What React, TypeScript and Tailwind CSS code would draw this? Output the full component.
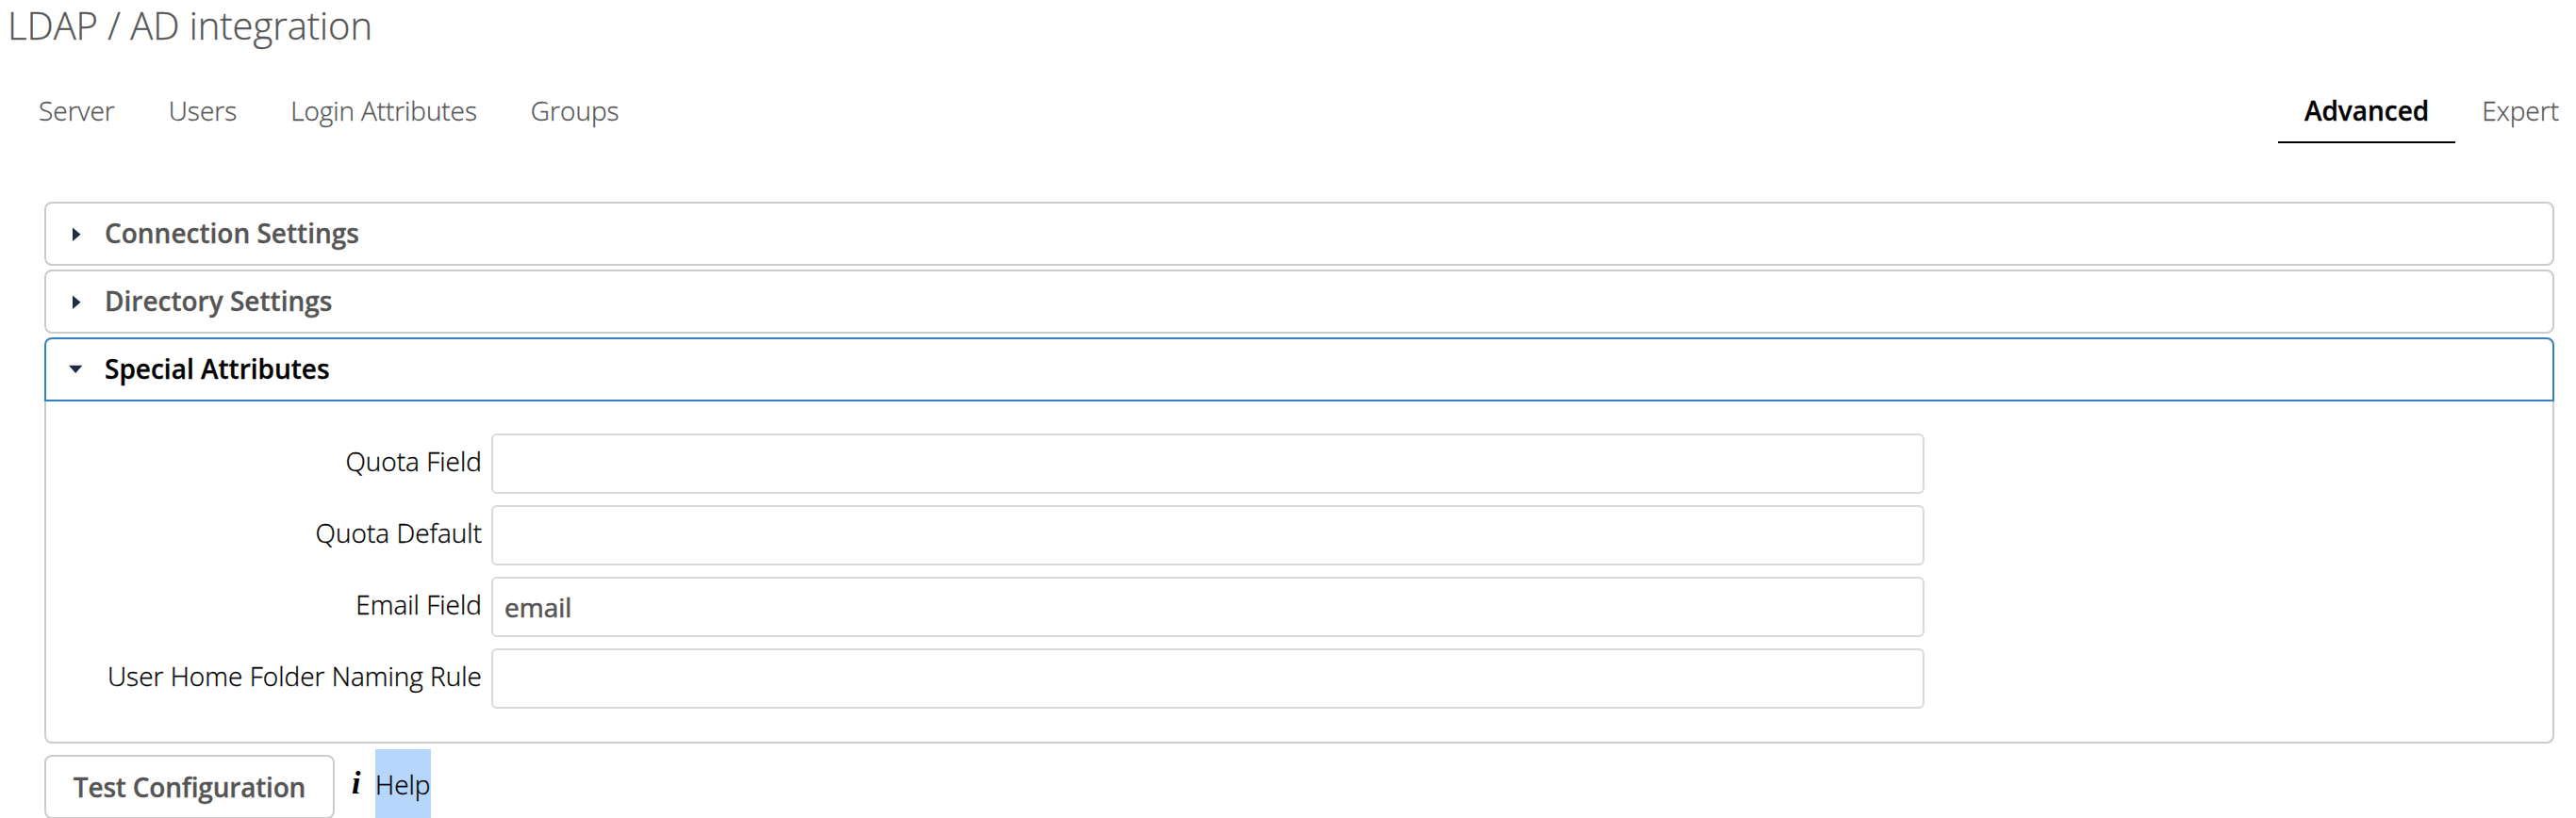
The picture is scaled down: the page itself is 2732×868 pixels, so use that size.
import React from 'react';

const tab = 'h-[68px] leading-[66px] whitespace-nowrap';

function Field({ label, value = '' }: { label: string; value?: string }) {
  return (
    <div className="flex h-[76px]">
      <label className="mr-[10px] w-[462px] pt-[9px] text-right text-[28px] leading-[40px] font-light text-black">{label}</label>
      <input readOnly value={value} className="h-[64px] w-[1520px] rounded-[6px] border-2 border-[#d9d9d9] px-[12px] pb-px text-[28px] font-normal text-[#555] outline-none [-webkit-text-stroke:0.6px]" />
    </div>
  );
}

function Header({ title, open = false }: { title: string; open?: boolean }) {
  return (
    <div className={open ? 'flex h-[68px] items-center rounded-t-[8px] border-2 border-[#3182c4] pl-[24px] text-black' : 'mb-[4px] flex h-[68px] items-center rounded-[8px] border-2 border-[#ccc] pl-[24px] text-[#555]'}>
      <svg width="16" height="16" viewBox="0 0 16 16" className="mr-[22px]" fill="#1d2d44">
        {open ? <path d="M0 3.8H14.4L7.2 12Z" /> : <path d="M4 1.5V16L12.5 8.8Z" />}
      </svg>
      <span className="pb-[2px] text-[28px] leading-[40px] font-semibold">{title}</span>
    </div>
  );
}

export default function App() {
  return (
    <main className="h-[868px] w-[2732px] overflow-hidden bg-white font-['Open_Sans',sans-serif] text-[28px] font-light [-webkit-text-stroke:0.3px]">
      <h2 className="h-[84px] pl-[8px] text-[40px] leading-[54px] tracking-[-0.06px] text-[#555]">LDAP / AD integration</h2>
      <nav className="flex h-[130px] text-[#555]">
        <span className={tab + ' ml-[41px]'}>Server</span>
        <span className={tab + ' ml-[57px]'}>Users</span>
        <span className={tab + ' ml-[57px] tracking-[-0.1px]'}>Login Attributes</span>
        <span className={tab + ' ml-[57px]'}>Groups</span>
        <span className={tab + ' ml-auto border-b-2 border-black px-[28px] font-semibold text-black'}>Advanced</span>
        <span className={tab + ' mr-[18px] ml-[28px]'}>Expert</span>
      </nav>
      <section className="ml-[47px] w-[2662px]">
        <Header title="Connection Settings" />
        <Header title="Directory Settings" />
        <Header title="Special Attributes" open />
        <div className="h-[363px] rounded-b-[8px] border-2 border-t-0 border-[#ccc] pt-[34px]">
          <Field label="Quota Field" />
          <Field label="Quota Default" />
          <Field label="Email Field" value="email" />
          <Field label="User Home Folder Naming Rule" />
        </div>
      </section>
      <footer className="flex pl-[47px]">
        <button className="mt-[12px] h-[68px] w-[308px] rounded-[8px] border-2 border-[#ccc] font-semibold tracking-[-0.2px] text-[#555]">Test Configuration</button>
        <span className="mt-[6px] ml-[18px] w-[25px] pt-[10px] font-['Liberation_Serif',serif] text-[34px] font-bold italic text-black [-webkit-text-stroke:0px]">i</span>
        <span className="mt-[6px] h-[80px] bg-[#b7d6fb] leading-[74px] text-black">Help</span>
      </footer>
    </main>
  );
}
